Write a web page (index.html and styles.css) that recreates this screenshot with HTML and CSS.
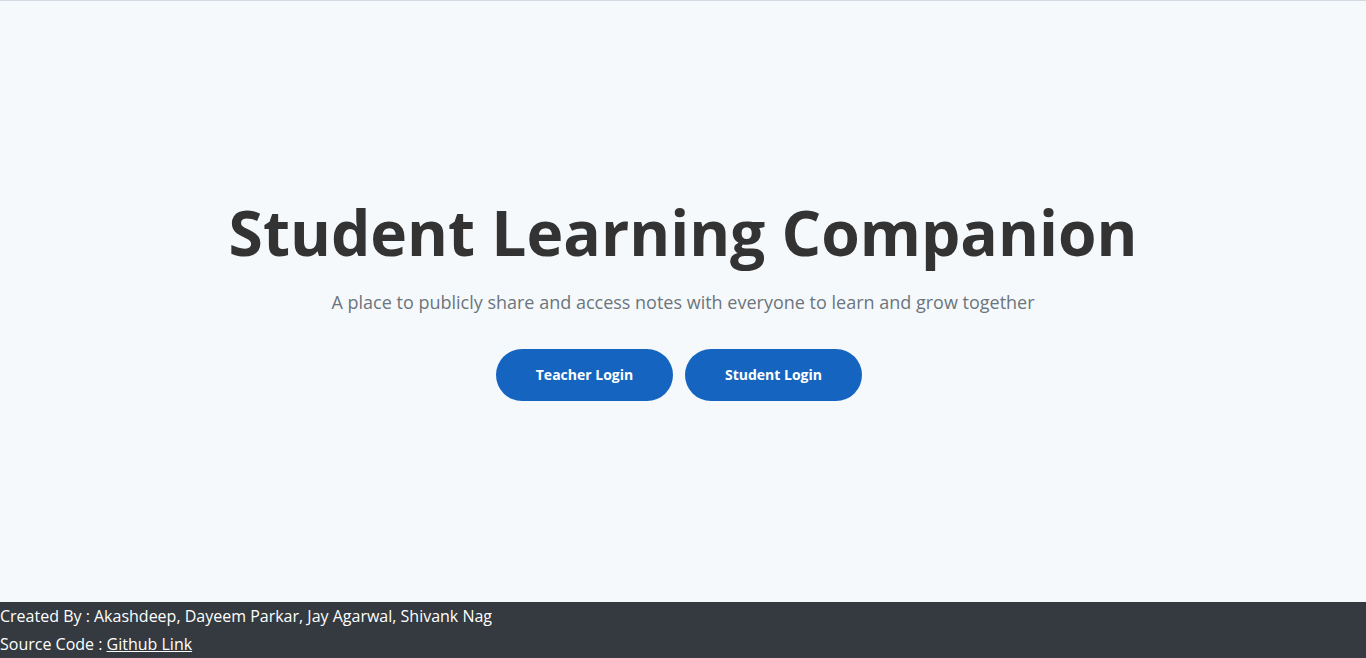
FILE: index.html
```html
<!DOCTYPE html>
<html>
<head>
<meta charset="utf-8">
<link rel="stylesheet" href="styles.css">
</head>
<body>
<main class="hero">
  <h1 class="title">Student Learning Companion</h1>
  <p class="subtitle">A place to publicly share and access notes with everyone to learn and grow together</p>
  <div class="actions">
    <a class="btn" href="#">Teacher Login</a>
    <a class="btn" href="#">Student Login</a>
  </div>
</main>
<footer class="footer">
  <div class="line">Created By : Akashdeep, Dayeem Parkar, Jay Agarwal, Shivank Nag</div>
  <div class="line">Source Code : <a class="link" href="#">Github Link</a></div>
</footer>
</body>
</html>
```
FILE: styles.css
```css
html, body {
  margin: 0;
  padding: 0;
  height: 100%;
}
body {
  font-family: "Open Sans", "Liberation Sans", sans-serif;
  background: #f5f9fc;
  border-top: 1px solid #d3d9e0;
  box-sizing: border-box;
  display: flex;
  flex-direction: column;
}
.hero {
  flex: 1;
  display: flex;
  flex-direction: column;
  align-items: center;
  justify-content: center;
  padding-bottom: 8px;
}
.title {
  margin: 0;
  font-size: 62.3px;
  font-weight: 700;
  color: #333333;
  line-height: 74px;
}
.subtitle {
  margin: 20px 0 0;
  font-size: 18px;
  color: #6c757d;
  line-height: 1.5;
}
.actions {
  display: flex;
  gap: 12px;
  margin-top: 33px;
  padding-right: 8px;
}
.btn {
  display: flex;
  align-items: center;
  justify-content: center;
  width: 177px;
  height: 52px;
  border-radius: 26px;
  background: #1565c0;
  color: #ffffff;
  font-weight: 700;
  font-size: 14px;
  text-decoration: none;
}
.footer {
  background: #343a40;
  color: #ffffff;
  font-size: 16px;
  line-height: 28px;
}
.link {
  color: #ffffff;
  text-decoration: underline;
}
```
